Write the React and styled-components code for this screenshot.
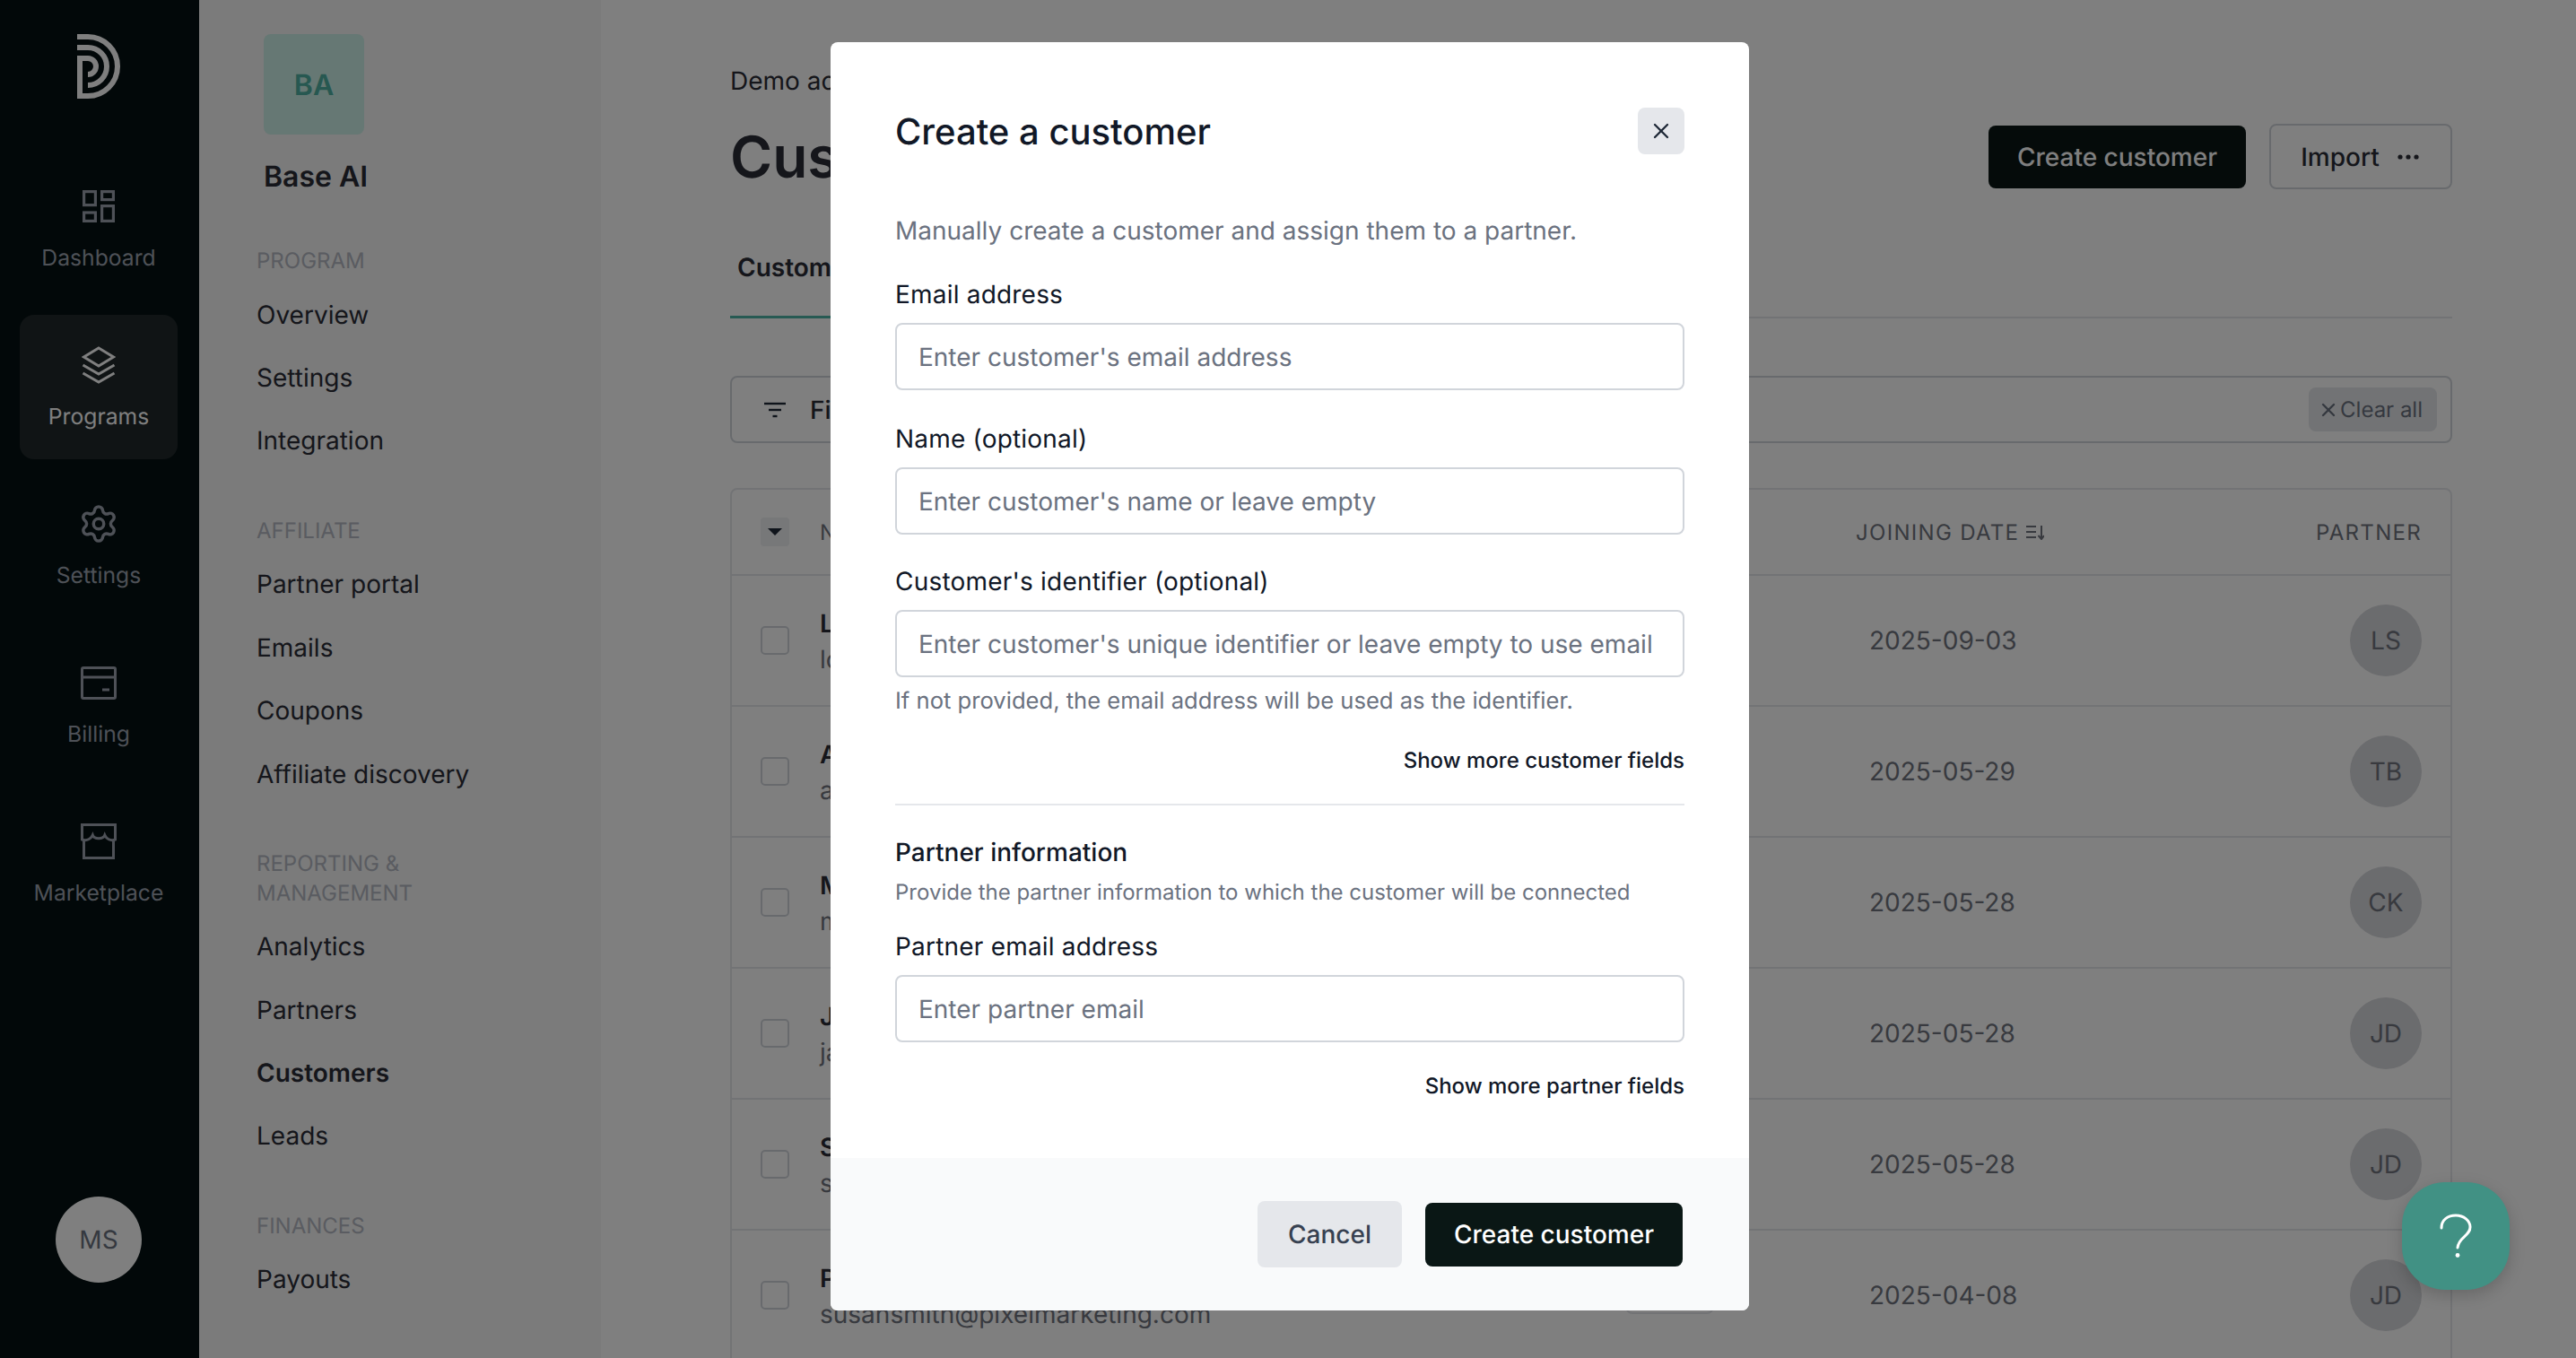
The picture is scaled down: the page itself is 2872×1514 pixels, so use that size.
import React from "react";
import styled, { createGlobalStyle } from "styled-components";
import { Settings as SettingsIcon, X } from "lucide-react";

const GlobalStyle = createGlobalStyle`
   html, body {
      margin: 0;
      padding: 0;
      background: #fff;
   }
   * {
      box-sizing: border-box;
   }
   body {
      font-family: Inter, "Noto Sans", sans-serif;
      color: #1f2937;
      text-rendering: geometricPrecision;
   }
`;

const Page = styled.div`
   position: relative;
   display: flex;
   width: 2872px;
   height: 1514px;
   overflow: hidden;
   background: #fff;
`;

/* left rail */
const Rail = styled.nav`
   flex: 0 0 222px;
   display: flex;
   flex-direction: column;
   align-items: center;
   padding: 38px 2px 0 0;
   background: #051012;
`;

const LogoMark = styled.svg`
   display: block;
   width: 48px;
   height: 72px;
   color: #fff;
`;

const RailList = styled.div`
   display: flex;
   flex-direction: column;
   gap: 16px;
   margin-top: 64px;
`;

const RailItem = styled.a`
   display: flex;
   flex-direction: column;
   align-items: center;
   width: 176px;
   height: 161px;
   border-radius: 16px;
   background: ${(props) => (props.$active ? "#20292b" : "transparent")};
   color: ${(props) => (props.$active ? "#fff" : "#9ca3af")};
   font-size: 24.7px;
   line-height: 32px;
`;

const RailIcon = styled.span`
   display: flex;
   align-items: center;
   justify-content: center;
   height: 44px;
   margin-top: 34px;
   margin-bottom: 19px;
`;

const RailAvatar = styled.div`
   display: flex;
   align-items: center;
   justify-content: center;
   width: 96px;
   height: 96px;
   margin-top: auto;
   margin-bottom: 84px;
   border-radius: 50%;
   background: #fff;
   color: #6b7280;
   font-size: 28px;
`;

/* second column */
const Sidebar = styled.aside`
   flex: 0 0 448px;
   padding: 38px 40px 0 64px;
   background: #f6f6f6;
`;

const OrgBadge = styled.div`
   display: flex;
   align-items: center;
   justify-content: center;
   width: 112px;
   height: 112px;
   margin-left: 8px;
   border-radius: 8px;
   background: #ccf0e8;
   color: #4fb0a2;
   font-size: 32px;
   font-weight: 600;
`;

const OrgName = styled.div`
   margin: 27px 0 58px 8px;
   font-size: 32px;
   font-weight: 600;
   line-height: 40px;
   color: #2b2d36;
`;

const NavGroup = styled.div`
   margin-bottom: 49px;
`;

const NavHeading = styled.div`
   max-width: 240px;
   margin-bottom: 8px;
   font-size: 24px;
   line-height: 32.6px;
   text-transform: uppercase;
   color: #b4b8c2;
`;

const NavLink = styled.a`
   display: block;
   font-size: 28px;
   line-height: 70.4px;
   font-weight: ${(props) => (props.$active ? 600 : 400)};
   color: #2b2d36;
`;

/* main area */
const Main = styled.main`
   flex: 1;
   min-width: 0;
   padding: 70px 138px 0 144px;
`;

const Header = styled.header`
   display: flex;
   justify-content: space-between;
`;

const Crumb = styled.div`
   font-size: 28px;
   line-height: 40px;
   color: #2b2d36;
`;

const PageTitle = styled.h1`
   margin: 30px 0 0;
   font-size: 64px;
   font-weight: 600;
   line-height: 72px;
   color: #2b2d36;
`;

const HeaderActions = styled.div`
   display: flex;
   align-items: center;
   gap: 26px;
   height: 73px;
   margin-top: 68px;
`;

const PrimaryButton = styled.button`
   display: flex;
   align-items: center;
   justify-content: center;
   width: ${(props) => props.$width};
   height: ${(props) => props.$height};
   padding: 0;
   border: 0;
   border-radius: 8px;
   background: #0a1715;
   color: #fff;
   font-family: inherit;
   font-size: 28px;
   font-weight: 500;
   text-rendering: inherit;
`;

const OutlineButton = styled.button`
   display: flex;
   align-items: center;
   justify-content: center;
   gap: 20px;
   width: 204px;
   height: 73px;
   padding: 0 2px 0 0;
   border: 2px solid #d1d5db;
   border-radius: 8px;
   background: #fff;
   color: #2b2d36;
   font-family: inherit;
   font-size: 28px;
   font-weight: 500;
   text-rendering: inherit;
`;

const TabBar = styled.div`
   display: flex;
   margin-top: 48px;
   border-bottom: 2px solid #e5e7eb;
`;

const Tab = styled.div`
   margin-bottom: -2px;
   padding: 20px 120px 36px 8px;
   border-bottom: 3px solid #4fb5a6;
   font-size: 28px;
   font-weight: 600;
   line-height: 36px;
   color: #2b2d36;
`;

const FilterBar = styled.div`
   display: flex;
   align-items: center;
   justify-content: space-between;
   height: 75px;
   margin-top: 64px;
   padding: 0 15px 0 36px;
   border: 2px solid #d1d5db;
   border-radius: 8px;
`;

const FilterLabel = styled.div`
   display: flex;
   align-items: center;
   gap: 27px;
   font-size: 28px;
   font-weight: 500;
   color: #2b2d36;
`;

const ClearButton = styled.button`
   display: flex;
   align-items: center;
   gap: 1px;
   height: 49px;
   padding: 0 16px 0 10px;
   border: 0;
   border-radius: 8px;
   background: #e5e7eb;
   color: #6b7280;
   font-family: inherit;
   font-size: 24px;
   text-rendering: inherit;
`;

const Table = styled.div`
   margin-top: 50px;
   border: 2px solid #e5e7eb;
   border-radius: 8px 8px 0 0;
`;

const HeadRow = styled.div`
   display: grid;
   grid-template-columns: 66px 898px 99px 158px 350px 281px;
   align-items: center;
   height: 96px;
   padding: 0 32px;
   border-bottom: 2px solid #e5e7eb;
   font-size: 24px;
   letter-spacing: 1.3px;
   text-transform: uppercase;
   color: #70747f;
`;

const Row = styled.div`
   display: grid;
   grid-template-columns: 66px 898px 99px 158px 350px 281px;
   align-items: center;
   height: 146px;
   padding: 0 32px;
   border-bottom: 2px solid #e5e7eb;
`;

const SelectAll = styled.div`
   display: flex;
   align-items: center;
   justify-content: center;
   width: 32px;
   height: 32px;
   border-radius: 4px;
   background: #eef0f2;
`;

const Checkbox = styled.div`
   width: 32px;
   height: 32px;
   border: 2px solid #d1d5db;
   border-radius: 5px;
`;

const SortHead = styled.div`
   display: flex;
   align-items: center;
   gap: 8px;
`;

const PartnerHead = styled.div`
   text-align: right;
`;

const NameCell = styled.div`
   margin-top: 2px;
`;

const CustomerName = styled.div`
   font-size: 28px;
   font-weight: 600;
   line-height: 40px;
   color: #2b2d36;
`;

const CustomerEmail = styled.div`
   font-size: 28px;
   line-height: 40px;
   color: #70747f;
`;

const StatusChip = styled.div`
   height: 42px;
   border: 2px solid #e5e7eb;
   border-radius: 8px;
`;

const DateCell = styled.div`
   padding-left: 15px;
   font-size: 28px;
   color: #70747f;
`;

const PartnerCell = styled.div`
   display: flex;
   justify-content: flex-end;
`;

const PartnerAvatar = styled.div`
   display: flex;
   align-items: center;
   justify-content: center;
   width: 80px;
   height: 80px;
   border-radius: 50%;
   background: #d7d8dc;
   color: #70747f;
   font-size: 28px;
`;

/* dialog */
const Overlay = styled.div`
   position: absolute;
   inset: 0;
   display: flex;
   align-items: flex-start;
   justify-content: center;
   padding: 47px 0 0 4px;
   background: rgba(0, 0, 0, 0.5);
`;

const Modal = styled.div`
   width: 1024px;
   height: 1414px;
   overflow: hidden;
   border-radius: 8px;
   background: #fff;
`;

const ModalBody = styled.div`
   padding: 73px 72px 0 72px;
`;

const ModalHeader = styled.div`
   display: flex;
   align-items: center;
   justify-content: space-between;
`;

const ModalTitle = styled.h2`
   margin: 2px 0 0;
   font-size: 40px;
   font-weight: 500;
   line-height: 50px;
   color: #111827;
`;

const CloseButton = styled.button`
   display: flex;
   align-items: center;
   justify-content: center;
   width: 52px;
   height: 52px;
   padding: 0;
   border: 0;
   border-radius: 8px;
   background: #e5e7eb;
   color: #1f2937;
`;

const Description = styled.p`
   margin: 65px 0 0;
   font-size: 28px;
   line-height: 40px;
   color: #6b7280;
`;

const FieldLabel = styled.label`
   display: block;
   margin-top: ${(props) => props.$top}px;
   margin-bottom: 12px;
   font-size: 28px;
   font-weight: 400;
   line-height: 40px;
   letter-spacing: 0.2px;
   color: #111827;
`;

const TextInput = styled.input`
   display: block;
   width: 100%;
   height: 75px;
   padding: 0 24px;
   border: 2px solid #d1d5db;
   border-radius: 8px;
   background: #fff;
   font-family: inherit;
   font-size: 28px;
   text-rendering: inherit;
   outline: none;

   &::placeholder {
      color: #6b7280;
      opacity: 1;
   }
`;

const Hint = styled.p`
   margin: 9px 0 0;
   font-size: 25.6px;
   line-height: 36px;
   color: #6b7280;
`;

const MoreLink = styled.div`
   margin-top: ${(props) => props.$top}px;
   font-size: 24px;
   font-weight: 500;
   line-height: 36px;
   text-align: right;
   color: #111827;
`;

const Divider = styled.hr`
   height: 2px;
   margin: 30px 0 32px;
   border: 0;
   background: #e5e7eb;
`;

const SectionTitle = styled.div`
   font-size: 28px;
   font-weight: 500;
   line-height: 40px;
   color: #111827;
`;

const SectionText = styled.div`
   margin-top: 9px;
   font-size: 24px;
   line-height: 32px;
   color: #6b7280;
`;

const ModalFooter = styled.div`
   display: flex;
   align-items: center;
   justify-content: flex-end;
   gap: 26px;
   height: 170px;
   margin-top: 62px;
   padding-right: 74px;
   background: #f9fafb;
`;

const CancelButton = styled.button`
   width: 161px;
   height: 74px;
   padding: 0;
   border: 0;
   border-radius: 8px;
   background: #e5e7eb;
   color: #374151;
   font-family: inherit;
   font-size: 28px;
   font-weight: 500;
   text-rendering: inherit;
`;

const HelpButton = styled.button`
   position: absolute;
   right: 74px;
   bottom: 76px;
   display: flex;
   align-items: center;
   justify-content: center;
   width: 120px;
   height: 120px;
   padding: 0;
   border: 0;
   border-radius: 48px;
   background: #419184;
   box-shadow: 0 6px 18px rgba(0, 0, 0, 0.18);
`;

const Logo = () => (
   <LogoMark viewBox="0 0 48 72" fill="none" stroke="currentColor" strokeWidth="6">
      <path d="M0 3H12A33 33 0 0 1 12 69H3V27H12A9 9 0 0 1 12 45" />
      <path d="M0 15H12A21 21 0 0 1 12 57" />
   </LogoMark>
);

const DashboardIcon = () => (
   <svg width="36" height="36" viewBox="0 0 36 36" fill="none" stroke="currentColor" strokeWidth="3.2">
      <rect x="1.6" y="1.6" width="12.8" height="15" />
      <rect x="21.6" y="1.6" width="12.8" height="9" />
      <rect x="1.6" y="25" width="12.8" height="9.4" />
      <rect x="21.6" y="17.6" width="12.8" height="16.8" />
   </svg>
);

const LayersIcon = () => (
   <svg width="38" height="42" viewBox="0 0 38 42" fill="none" stroke="currentColor" strokeWidth="3">
      <path d="M19 2L35.5 12L19 22L2.5 12Z" />
      <path d="M1.5 21L19 31L36.5 21" />
      <path d="M1.5 30L19 40L36.5 30" />
   </svg>
);

const BillingIcon = () => (
   <svg width="40" height="37" viewBox="0 0 40 37" fill="none" stroke="currentColor" strokeWidth="3">
      <rect x="1.5" y="1.5" width="37" height="34" rx="1.5" />
      <path d="M1.5 12H38.5" />
      <path d="M24 26H32" />
   </svg>
);

const StoreIcon = () => (
   <svg width="40" height="40" viewBox="0 0 40 40" fill="none" stroke="currentColor" strokeWidth="3">
      <path d="M1.5 18V1.5H38.5V18C33 20 28.5 17 26.8 13C25 18 15 18 13.3 13C11.5 17 7 20 1.5 18Z" />
      <path d="M3.5 18V38.5H36.5V18" />
   </svg>
);

const FilterIcon = () => (
   <svg width="24" height="18" viewBox="0 0 24 18" fill="none" stroke="#1f2937" strokeWidth="2.4">
      <path d="M0 2H24" />
      <path d="M5 9H19" />
      <path d="M9.5 16H14.5" />
   </svg>
);

const SortIcon = () => (
   <svg width="20" height="17" viewBox="0 0 20 17" fill="none" stroke="#70747f" strokeWidth="2">
      <path d="M0 2H11" />
      <path d="M0 8H11" />
      <path d="M0 14H11" />
      <path d="M17 1V15" />
      <path d="M13.5 12L17 16L20 12" />
   </svg>
);

const DotsIcon = () => (
   <svg width="24" height="6" viewBox="0 0 24 6" fill="#2b2d36">
      <circle cx="3" cy="3" r="2.6" />
      <circle cx="12" cy="3" r="2.6" />
      <circle cx="21" cy="3" r="2.6" />
   </svg>
);

const CaretIcon = () => (
   <svg width="16" height="8" viewBox="0 0 16 8" fill="#1f2937">
      <path d="M0 0H16L8 8Z" />
   </svg>
);

const QuestionIcon = () => (
   <svg width="36" height="50" viewBox="0 0 36 50" fill="none" stroke="#fff" strokeWidth="3" strokeLinecap="round">
      <path d="M2 16C2 7 9 2 18 2C27 2 34 8 34 15C34 25 21 26 20 38" />
      <circle cx="20" cy="46.5" r="2.4" fill="#fff" stroke="none" />
   </svg>
);

const railItems = [
   { label: "Dashboard", icon: <DashboardIcon /> },
   { label: "Programs", icon: <LayersIcon />, active: true },
   { label: "Settings", icon: <SettingsIcon size={46} strokeWidth={1.8} /> },
   { label: "Billing", icon: <BillingIcon /> },
   { label: "Marketplace", icon: <StoreIcon /> },
];

const navGroups = [
   { title: "Program", links: ["Overview", "Settings", "Integration"] },
   { title: "Affiliate", links: ["Partner portal", "Emails", "Coupons", "Affiliate discovery"] },
   { title: "Reporting & management", links: ["Analytics", "Partners", "Customers", "Leads"] },
   { title: "Finances", links: ["Payouts"] },
];

const customers = [
   { name: "Lola Stone", email: "lola@example.com", date: "2025-09-03", partner: "LS" },
   { name: "Anna Brown", email: "anna@example.com", date: "2025-05-29", partner: "TB" },
   { name: "Mark Clark", email: "mark@example.com", date: "2025-05-28", partner: "CK" },
   { name: "Jane Doe", email: "jane@example.com", date: "2025-05-28", partner: "JD" },
   { name: "Sam Doe", email: "sam@example.com", date: "2025-05-28", partner: "JD" },
   { name: "Pat Smith", email: "susansmith@pixelmarketing.com", date: "2025-04-08", partner: "JD" },
];

const App = () => {
   return (
      <Page>
         <GlobalStyle />
         <Rail>
            <Logo />
            <RailList>
               {railItems.map((item) => (
                  <RailItem key={item.label} $active={item.active}>
                     <RailIcon>{item.icon}</RailIcon>
                     {item.label}
                  </RailItem>
               ))}
            </RailList>
            <RailAvatar>MS</RailAvatar>
         </Rail>

         <Sidebar>
            <OrgBadge>BA</OrgBadge>
            <OrgName>Base AI</OrgName>
            {navGroups.map((group) => (
               <NavGroup key={group.title}>
                  <NavHeading>{group.title}</NavHeading>
                  {group.links.map((link) => (
                     <NavLink key={link} $active={link === "Customers"}>
                        {link}
                     </NavLink>
                  ))}
               </NavGroup>
            ))}
         </Sidebar>

         <Main>
            <Header>
               <div>
                  <Crumb>Demo account</Crumb>
                  <PageTitle>Customers</PageTitle>
               </div>
               <HeaderActions>
                  <PrimaryButton $width="287px" $height="70px">Create customer</PrimaryButton>
                  <OutlineButton>
                     Import
                     <DotsIcon />
                  </OutlineButton>
               </HeaderActions>
            </Header>

            <TabBar>
               <Tab>Customers</Tab>
            </TabBar>

            <FilterBar>
               <FilterLabel>
                  <FilterIcon />
                  Filters
               </FilterLabel>
               <ClearButton>
                  <X size={24} strokeWidth={2.4} />
                  Clear all
               </ClearButton>
            </FilterBar>

            <Table>
               <HeadRow>
                  <SelectAll>
                     <CaretIcon />
                  </SelectAll>
                  <div>Name</div>
                  <div />
                  <div />
                  <SortHead>
                     Joining date
                     <SortIcon />
                  </SortHead>
                  <PartnerHead>Partner</PartnerHead>
               </HeadRow>
               {customers.map((customer) => (
                  <Row key={customer.email}>
                     <Checkbox />
                     <NameCell>
                        <CustomerName>{customer.name}</CustomerName>
                        <CustomerEmail>{customer.email}</CustomerEmail>
                     </NameCell>
                     <StatusChip />
                     <div />
                     <DateCell>{customer.date}</DateCell>
                     <PartnerCell>
                        <PartnerAvatar>{customer.partner}</PartnerAvatar>
                     </PartnerCell>
                  </Row>
               ))}
            </Table>
         </Main>

         <Overlay>
            <Modal>
               <ModalBody>
                  <ModalHeader>
                     <ModalTitle>Create a customer</ModalTitle>
                     <CloseButton>
                        <X size={28} strokeWidth={2} />
                     </CloseButton>
                  </ModalHeader>
                  <Description>Manually create a customer and assign them to a partner.</Description>

                  <FieldLabel $top={31}>Email address</FieldLabel>
                  <TextInput placeholder="Enter customer's email address" />

                  <FieldLabel $top={34}>Name (optional)</FieldLabel>
                  <TextInput placeholder="Enter customer's name or leave empty" />

                  <FieldLabel $top={32}>Customer's identifier (optional)</FieldLabel>
                  <TextInput placeholder="Enter customer's unique identifier or leave empty to use email" />
                  <Hint>If not provided, the email address will be used as the identifier.</Hint>
                  <MoreLink $top={30}>Show more customer fields</MoreLink>

                  <Divider />

                  <SectionTitle>Partner information</SectionTitle>
                  <SectionText>Provide the partner information to which the customer will be connected</SectionText>

                  <FieldLabel $top={24}>Partner email address</FieldLabel>
                  <TextInput placeholder="Enter partner email" />
                  <MoreLink $top={31}>Show more partner fields</MoreLink>
               </ModalBody>
               <ModalFooter>
                  <CancelButton>Cancel</CancelButton>
                  <PrimaryButton $width="287px" $height="71px">Create customer</PrimaryButton>
               </ModalFooter>
            </Modal>
         </Overlay>

         <HelpButton>
            <QuestionIcon />
         </HelpButton>
      </Page>
   );
};

export default App;
